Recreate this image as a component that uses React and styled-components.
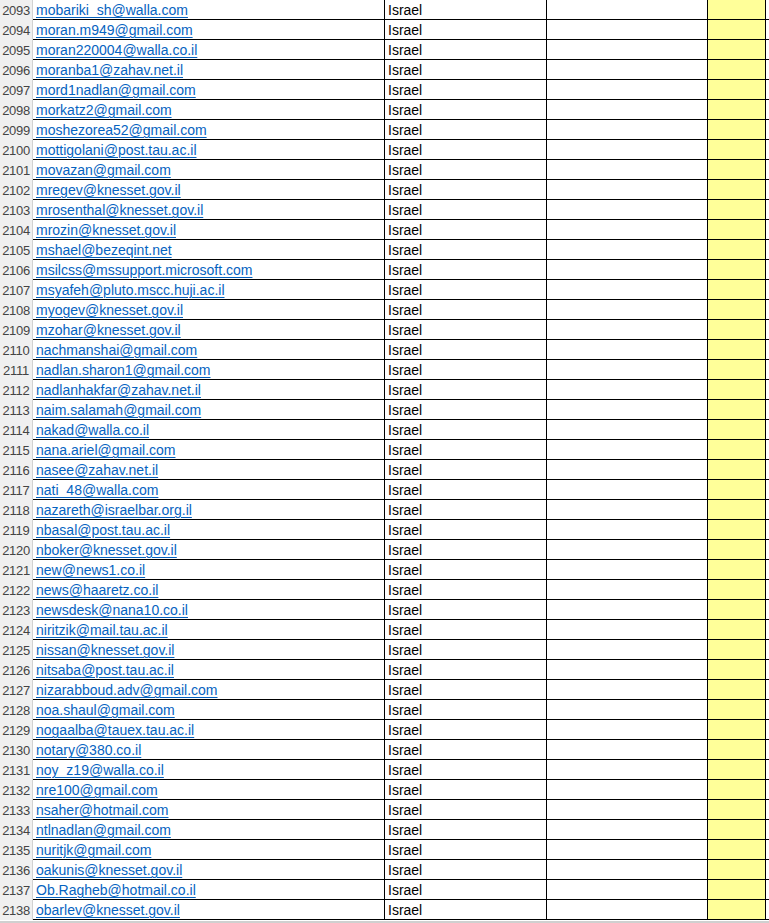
import React from 'react';
import styled, { createGlobalStyle } from 'styled-components';

const GlobalStyle = createGlobalStyle`
  html, body {
    margin: 0;
    padding: 0;
    background: #ffffff;
    overflow: hidden;
  }
  body {
    font-family: 'Liberation Sans', Arial, sans-serif;
  }
`;

const Sheet = styled.div`
  width: 769px;
  height: 923px;
  overflow: hidden;
  background: #ffffff;
`;

const Row = styled.div`
  display: grid;
  grid-template-columns: 33px 352px 162px 161px 58px 1fr;
  height: 20px;
`;

const RowHeader = styled.div`
  box-sizing: border-box;
  height: 20px;
  background: #f0f0f0;
  border-right: 1px solid #d2d2d2;
  color: #444444;
  font-size: 13px;
  line-height: 19px;
  padding-top: 1px;
  text-align: center;
  letter-spacing: -0.3px;
`;

const Cell = styled.div`
  box-sizing: border-box;
  height: 20px;
  border-bottom: 1px solid #000000;
  border-right: ${({ $last }) => ($last ? 'none' : '1px solid #000000')};
  background: ${({ $fill }) => $fill || '#ffffff'};
  font-size: 14px;
  line-height: 19px;
  padding: 1px 2px 0 3px;
  color: #000000;
  white-space: nowrap;
  overflow: hidden;
`;

const Link = styled.a`
  color: #0563c1;
  text-decoration: underline;
  text-decoration-thickness: 1px;
  text-underline-offset: 2px;
`;

const Footer = styled.div`
  height: 3px;
  margin-top: 1px;
  background: #d0d0d0;
`;

const emails = [
  'mobariki_sh@walla.com',
  'moran.m949@gmail.com',
  'moran220004@walla.co.il',
  'moranba1@zahav.net.il',
  'mord1nadlan@gmail.com',
  'morkatz2@gmail.com',
  'moshezorea52@gmail.com',
  'mottigolani@post.tau.ac.il',
  'movazan@gmail.com',
  'mregev@knesset.gov.il',
  'mrosenthal@knesset.gov.il',
  'mrozin@knesset.gov.il',
  'mshael@bezeqint.net',
  'msilcss@mssupport.microsoft.com',
  'msyafeh@pluto.mscc.huji.ac.il',
  'myogev@knesset.gov.il',
  'mzohar@knesset.gov.il',
  'nachmanshai@gmail.com',
  'nadlan.sharon1@gmail.com',
  'nadlanhakfar@zahav.net.il',
  'naim.salamah@gmail.com',
  'nakad@walla.co.il',
  'nana.ariel@gmail.com',
  'nasee@zahav.net.il',
  'nati_48@walla.com',
  'nazareth@israelbar.org.il',
  'nbasal@post.tau.ac.il',
  'nboker@knesset.gov.il',
  'new@news1.co.il',
  'news@haaretz.co.il',
  'newsdesk@nana10.co.il',
  'niritzik@mail.tau.ac.il',
  'nissan@knesset.gov.il',
  'nitsaba@post.tau.ac.il',
  'nizarabboud.adv@gmail.com',
  'noa.shaul@gmail.com',
  'nogaalba@tauex.tau.ac.il',
  'notary@380.co.il',
  'noy_z19@walla.co.il',
  'nre100@gmail.com',
  'nsaher@hotmail.com',
  'ntlnadlan@gmail.com',
  'nuritjk@gmail.com',
  'oakunis@knesset.gov.il',
  'Ob.Ragheb@hotmail.co.il',
  'obarlev@knesset.gov.il',
];

const FIRST_ROW = 2093;

const App = () => (
  <>
    <GlobalStyle />
    <Sheet>
      {emails.map((email, index) => (
        <Row key={email}>
          <RowHeader>{FIRST_ROW + index}</RowHeader>
          <Cell>
            <Link href={`mailto:${email}`}>{email}</Link>
          </Cell>
          <Cell>Israel</Cell>
          <Cell />
          <Cell $fill="#ffff99" />
          <Cell $last />
        </Row>
      ))}
      <Footer />
    </Sheet>
  </>
);

export default App;
